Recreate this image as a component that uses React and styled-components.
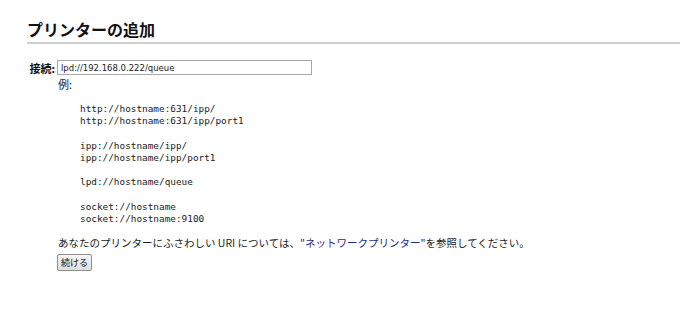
import React from "react";
import styled, { createGlobalStyle } from "styled-components";

const Global = createGlobalStyle`
  html, body { margin: 0; padding: 0; background: #fff; }
  body {
    font-family: "DejaVu Sans", "Noto Sans CJK JP", sans-serif;
    color: #111;
  }
`;

const Page = styled.div`
  padding: 19px 0 0 27px;
`;

const Title = styled.h2`
  margin: 0;
  font-family: "Noto Sans CJK JP", sans-serif;
  font-size: 16px;
  font-weight: 700;
  line-height: 20px;
  color: #111;
  padding-bottom: 3px;
  border-bottom: 2px solid #cfcfcf;
`;

const Form = styled.div`
  display: grid;
  grid-template-columns: 30px 1fr;
  margin-top: 16px;
`;

const Label = styled.div`
  font-family: "Noto Sans CJK JP", sans-serif;
  font-size: 11px;
  font-weight: 700;
  line-height: 16px;
  color: #111;
  text-align: right;
  padding-right: 2px;
`;

const Content = styled.div`
  display: flex;
  flex-direction: column;
  align-items: flex-start;
`;

const UriInput = styled.input`
  box-sizing: border-box;
  width: 255px;
  height: 15px;
  margin: 0;
  padding: 0 3px;
  border: 1px solid #a9a9a9;
  font-family: "DejaVu Sans", sans-serif;
  font-size: 8.5px;
  color: #222;
  outline: none;
`;

const Small = styled.div`
  font-family: "Noto Sans CJK JP", sans-serif;
  font-size: 11px;
  line-height: 16px;
  color: #222;
  margin-top: 1px;
  margin-left: 1px;
`;

const Examples = styled.pre`
  margin: 11px 0 0 23px;
  font-family: "DejaVu Sans Mono", monospace;
  font-size: 9.4px;
  line-height: 12.2px;
  color: #222;
`;

const Note = styled.p`
  margin: 10px 0 0 1px;
  font-family: "Noto Sans CJK JP", sans-serif;
  font-size: 10.5px;
  line-height: 16px;
  color: #222;
`;

const Link = styled.a`
  color: #28288a;
  text-decoration: none;
`;

const Button = styled.button`
  margin: 3px 0 0 0;
  height: 17px;
  padding: 0 3px;
  font-family: "Noto Sans CJK JP", sans-serif;
  font-size: 9px;
  line-height: 14px;
  color: #111;
  background: linear-gradient(#f6f6f6, #dedede);
  border: 1px solid #8f8f8f;
  border-radius: 2px;
`;

const examples = `http://hostname:631/ipp/
http://hostname:631/ipp/port1

ipp://hostname/ipp/
ipp://hostname/ipp/port1

lpd://hostname/queue

socket://hostname
socket://hostname:9100`;

export default function App() {
  return (
    <>
      <Global />
      <Page>
        <Title>プリンターの追加</Title>
        <Form>
          <Label>接続:</Label>
          <Content>
            <UriInput defaultValue="lpd://192.168.0.222/queue" />
            <Small>例:</Small>
            <Examples>{examples}</Examples>
            <Note>
              あなたのプリンターにふさわしい URI については、
              <Link href="#">"ネットワークプリンター"</Link>を参照してください。
            </Note>
            <Button>続ける</Button>
          </Content>
        </Form>
      </Page>
    </>
  );
}
